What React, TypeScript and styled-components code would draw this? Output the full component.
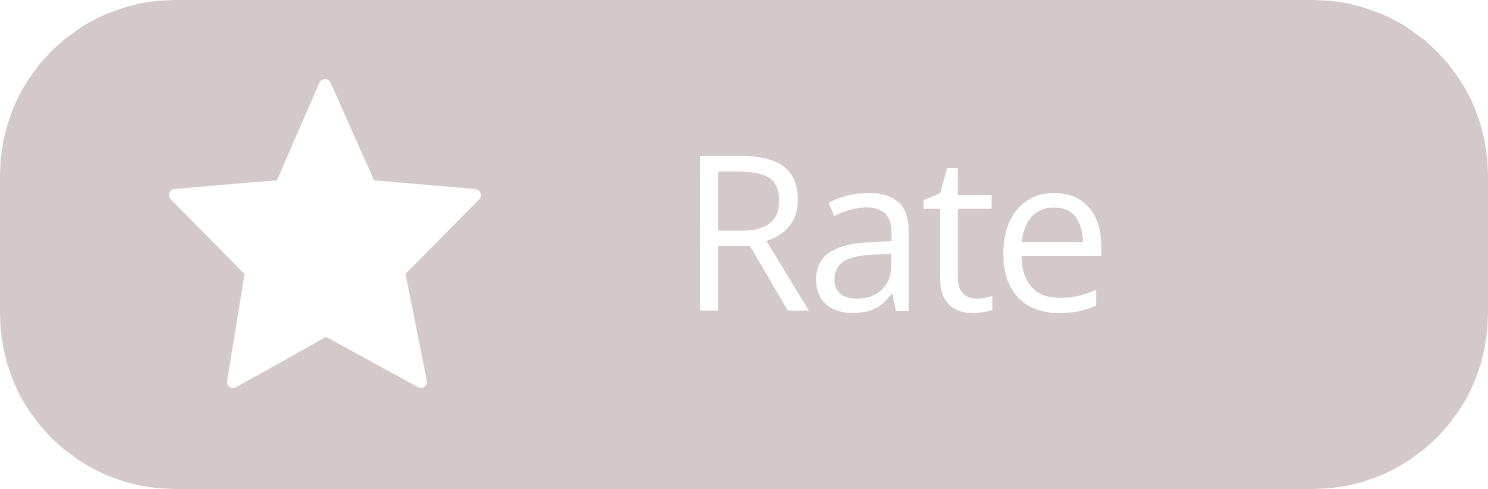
import styled, { createGlobalStyle } from "styled-components";

const GlobalStyle = createGlobalStyle`
  html, body {
    margin: 0;
    padding: 0;
    background: #ffffff;
  }
`;

const RateButton = styled.button`
  width: 1488px;
  height: 489px;
  display: flex;
  align-items: center;
  padding: 0 0 0 155px;
  border: none;
  border-radius: 175px;
  background-color: #d4c9c9;
  color: #ffffff;
  cursor: pointer;
  box-sizing: border-box;
`;

const StarIcon = styled.svg`
  width: 340px;
  height: 340px;
  flex-shrink: 0;
`;

const Label = styled.span`
  margin-left: 184px;
  font-family: "Open Sans", "Noto Sans", sans-serif;
  font-size: 216px;
  line-height: 1;
  letter-spacing: -6px;
  padding-bottom: 36px;
`;

function Star() {
  return (
    <StarIcon viewBox="155 74 340 340" aria-hidden="true">
      <polygon
        points="325,84 370,185 475,194 399,271 421,381 326,329 233,381 251,271 175,194 281,185"
        fill="#ffffff"
        stroke="#ffffff"
        strokeWidth="12"
        strokeLinejoin="round"
      />
    </StarIcon>
  );
}

export default function App() {
  return (
    <>
      <GlobalStyle />
      <RateButton>
        <Star />
        <Label>Rate</Label>
      </RateButton>
    </>
  );
}
